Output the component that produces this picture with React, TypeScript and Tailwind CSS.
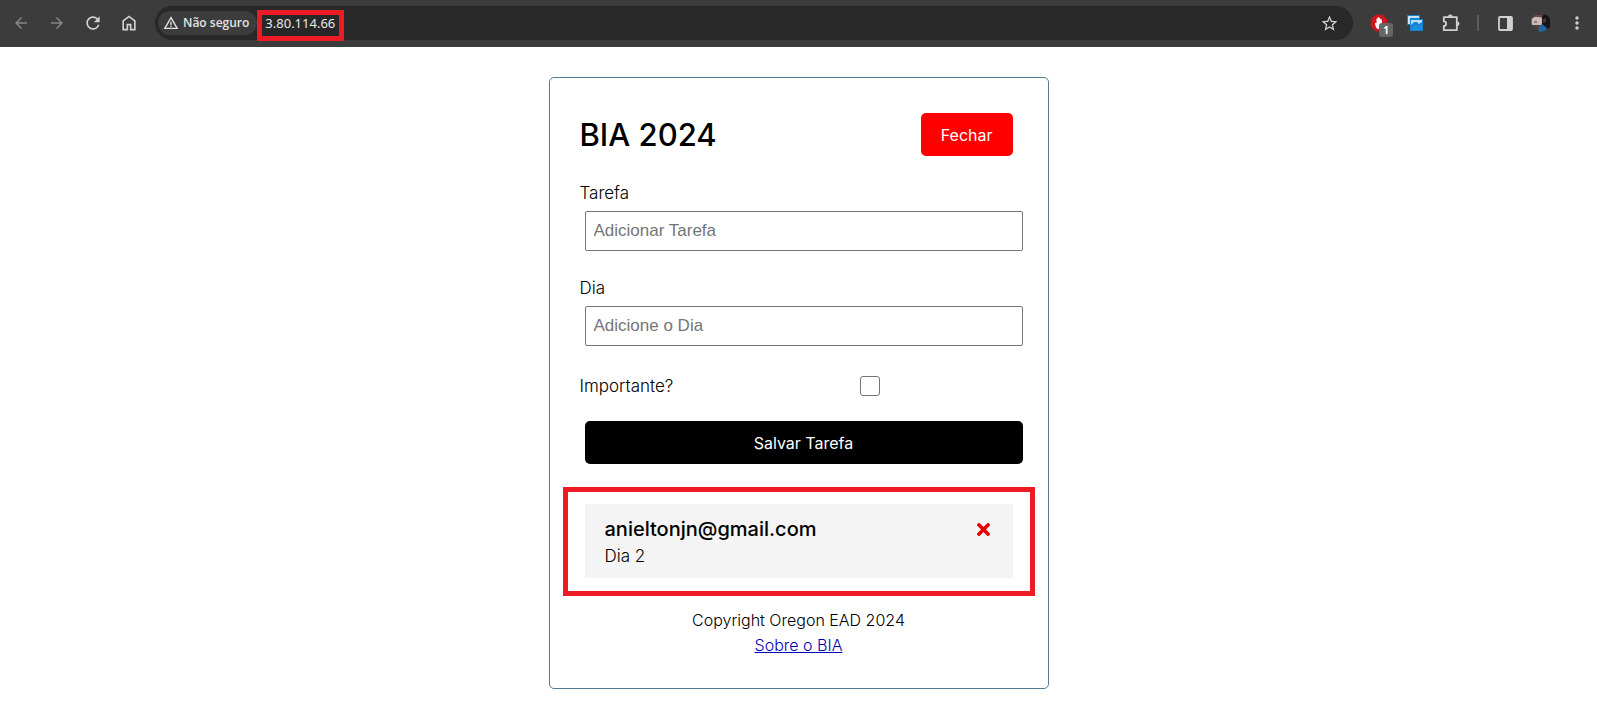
import type { ReactNode } from "react";
import { FaTimes } from "react-icons/fa";
import { MdArrowBack, MdArrowForward, MdMoreVert, MdRefresh, MdStarBorder, MdWarningAmber } from "react-icons/md";

function ToolButton({ label, children }: { label: string; children: ReactNode }) {
  return (
    <button type="button" aria-label={label} className="relative flex size-6 shrink-0 items-center justify-center">
      {children}
    </button>
  );
}

function HomeIcon() {
  return (
    <svg viewBox="0 0 24 24" className="size-5" fill="currentColor">
      <path d="M6 19h3v-6h6v6h3v-9l-6-4.5L6 10v9zm-2 2V9l8-6 8 6v12h-7v-6h-2v6H4z" />
    </svg>
  );
}

function BlockerIcon() {
  return (
    <svg viewBox="0 0 18 18" className="size-[18px]">
      <path d="M5.5 0.8h7l4.7 4.7v7l-4.7 4.7h-7L0.8 12.5v-7z" fill="#d3141c" />
      <path
        d="M5 9.500c0-1 1.200-1 1.500-.200V5c0-1 1.200-1 1.300 0V3.800c0-1 1.400-1 1.400 0v.900c0-.900 1.400-.900 1.400 0v1.200c0-.800 1.300-.800 1.300 0V11c0 2.600-1.200 4-3.300 4C6.300 15 5.600 12.500 5 9.500z"
        fill="#fff"
      />
    </svg>
  );
}

function PicturesIcon() {
  return (
    <svg viewBox="0 0 16 18" className="h-[18px] w-4">
      <path d="M0 1h13v10H0z" fill="#1683cf" />
      <path d="M1 2h11v2H3v6H1z" fill="#c8e6f7" />
      <path d="M3 5h13v12H3z" fill="#1683cf" />
      <path d="M4 6h11v2l-3 2-2-2H7L4 11z" fill="#b9e0f5" />
      <path d="M4 15c2-4 7-5 11-3v4H4z" fill="#1a8fdc" />
    </svg>
  );
}

function PuzzleIcon() {
  return (
    <svg viewBox="0 0 18 18" className="size-[18px]" fill="none" stroke="currentColor" strokeWidth="1.800" strokeLinejoin="round">
      <path d="M1.800 3.200h13v13h-13v-4.200a2.300 2.300 0 0 0 0-4.600z" />
      <path d="M6 2.800a2.300 2.300 0 0 1 4.600 0zM15.200 7.400a2.300 2.300 0 0 1 0 4.600z" fill="currentColor" stroke="none" />
    </svg>
  );
}

function SidePanelIcon() {
  return (
    <svg viewBox="0 0 15 15" className="size-[15px]">
      <rect x="1" y="1" width="13" height="13" rx="1" fill="none" stroke="currentColor" strokeWidth="1.800" />
      <path d="M9 1h5v13H9z" fill="currentColor" />
    </svg>
  );
}

function AvatarIcon() {
  return (
    <svg viewBox="0 0 20 20" className="size-5">
      <clipPath id="avatar">
        <circle cx="10" cy="10" r="10" />
      </clipPath>
      <g clipPath="url(#avatar)">
        <path d="M0 2h11v4H0z" fill="#6f4b43" />
        <path d="M0 6c3-3 9-2 12-1v7H1z" fill="#c9bcb8" />
        <path d="M3 8h3v2H3z" fill="#8d7774" />
        <path d="M11 4c2-4 8-3 8 3v8l-5 1-3-4z" fill="#17131a" />
        <path d="M12 6l3-1v4l-3 1z" fill="#57302f" />
        <path d="M7 14l4-3 5 4-2 3-6 1z" fill="#1d66a6" />
        <path d="M3 12h5v4H4z" fill="#573c3b" />
      </g>
    </svg>
  );
}

function BrowserBar() {
  return (
    <header className="flex h-[47px] items-center bg-[#3c3c3c] pr-2 pb-px pl-[9px] font-['Noto_Sans','Open_Sans',sans-serif] text-[#d0d0d0]">
      <nav className="flex gap-3">
        <span className="flex gap-3 text-[#858585]">
          <ToolButton label="Voltar">
            <MdArrowBack size={18} />
          </ToolButton>
          <ToolButton label="Avançar">
            <MdArrowForward size={18} />
          </ToolButton>
        </span>
        <ToolButton label="Recarregar">
          <MdRefresh size={20} />
        </ToolButton>
        <ToolButton label="Página inicial">
          <HomeIcon />
        </ToolButton>
      </nav>

      <div className="ml-[14px] flex h-[34px] flex-1 items-center rounded-full bg-[#282828] pr-3 pl-[3px]">
        <button
          type="button"
          className="flex h-6 shrink-0 items-center gap-1 rounded-full bg-[#3c3c3c] pr-2 pl-[5px] font-['Open_Sans','Noto_Sans',sans-serif] text-xs font-semibold whitespace-nowrap text-[#e3e3e3]"
        >
          <MdWarningAmber size={16} />
          Não seguro
        </button>
        <div className="relative ml-2 flex-1">
          <input
            aria-label="Endereço"
            defaultValue="3.80.114.66"
            className="block h-6 w-full bg-transparent text-[13px] text-[#e8e8e8] outline-none"
          />
          <div className="pointer-events-none absolute -top-[1px] -left-2 h-[31px] w-[87px] border-[5px] border-[#ed1c24]" />
        </div>
        <ToolButton label="Adicionar aos favoritos">
          <MdStarBorder size={19} />
        </ToolButton>
      </div>

      <div className="ml-[14px] flex items-center gap-3">
        <ToolButton label="Bloqueador">
          <BlockerIcon />
          <span className="absolute top-3 left-3 flex size-[14px] items-center justify-center rounded-[3px] bg-[#666] text-[10px] leading-none font-bold text-white">
            1
          </span>
        </ToolButton>
        <ToolButton label="Imagens">
          <PicturesIcon />
        </ToolButton>
        <ToolButton label="Extensões">
          <PuzzleIcon />
        </ToolButton>
        <span className="mx-0.5 h-4 w-0.5 bg-[#5c5c5c]" />
        <ToolButton label="Painel lateral">
          <SidePanelIcon />
        </ToolButton>
        <ToolButton label="Perfil">
          <AvatarIcon />
        </ToolButton>
        <ToolButton label="Menu">
          <MdMoreVert size={20} />
        </ToolButton>
      </div>
    </header>
  );
}

function TextField({ id, label, placeholder }: { id: string; label: string; placeholder: string }) {
  return (
    <div className="mb-[25px]">
      <label htmlFor={id} className="block">
        {label}
      </label>
      <input
        id={id}
        type="text"
        placeholder={placeholder}
        className="mx-[5px] mt-[5px] block h-10 w-full rounded-xs border border-[#767676] px-2 font-['Liberation_Sans',Arial,sans-serif] text-[17px] placeholder:text-[#757575]"
      />
    </div>
  );
}

export default function App() {
  return (
    <div className="min-h-screen bg-white">
      <BrowserBar />
      <main className="mx-auto mt-[30px] max-w-[500px] rounded-[5px] border border-[#557a94] p-[30px] font-['Inter','Noto_Sans',sans-serif] text-[17px] leading-[25px] font-light text-black">
        <div className="mb-5 flex items-center justify-between">
          <h1 className="text-[31px] leading-[51px] font-medium">BIA 2024</h1>
          <button type="button" className="m-[5px] h-[43px] rounded-[5px] bg-[#ff0000] px-5 text-base font-normal text-white">
            Fechar
          </button>
        </div>

        <form className="mb-10" onSubmit={(event) => event.preventDefault()}>
          <TextField id="tarefa" label="Tarefa" placeholder="Adicionar Tarefa" />
          <TextField id="dia" label="Dia" placeholder="Adicione o Dia" />
          <div className="mb-5 flex items-center">
            <label htmlFor="importante" className="flex-1">
              Importante?
            </label>
            <div className="m-[5px] flex flex-2 justify-center">
              <input
                id="importante"
                type="checkbox"
                className="size-5 appearance-none rounded-[3px] border border-[#767676] bg-white checked:bg-[#0075ff]"
              />
            </div>
          </div>
          <button type="submit" className="mx-[5px] block h-[43px] w-full rounded-[5px] bg-black text-base font-normal text-white">
            Salvar Tarefa
          </button>
        </form>

        <section className="relative mx-[5px] bg-[#f4f4f4] px-5 pt-[10px] pb-[9px]">
          <h2 className="flex items-center justify-between text-xl leading-[30px] font-medium">
            anieltonjn@gmail.com
            <button type="button" aria-label="Excluir tarefa" className="text-[#e60000]">
              <FaTimes size={19} />
            </button>
          </h2>
          <p>Dia 2</p>
          <div className="pointer-events-none absolute -inset-x-[22px] -top-[17px] -bottom-[18px] border-[5px] border-[#ed1c24]" />
        </section>

        <footer className="mt-[30px] text-center text-base leading-[25px]">
          <p>Copyright Oregon EAD 2024</p>
          <a href="#sobre" className="text-[#0000b8] underline">
            Sobre o BIA
          </a>
        </footer>
      </main>
    </div>
  );
}
